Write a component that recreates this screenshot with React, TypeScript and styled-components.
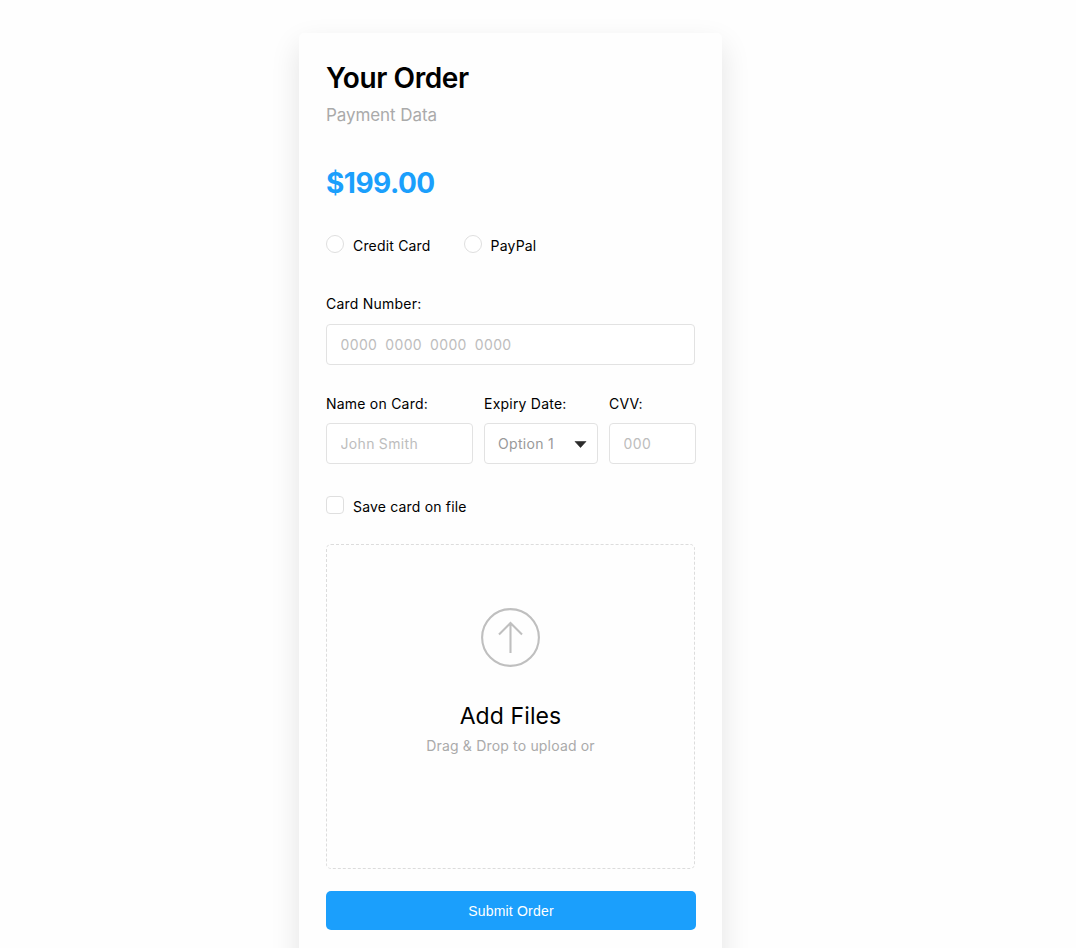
import React from "react";
import styled, { createGlobalStyle } from "styled-components";

const GlobalStyle = createGlobalStyle`
  *, *::before, *::after { box-sizing: border-box; }
  body {
    margin: 0;
    background: #fefefe;
    color: #000;
    font-family: Inter, sans-serif;
  }
`;

const Page = styled.main`
  height: 948px;
  padding: 33px 0 0 299px;
  overflow: hidden;
`;

const Card = styled.form`
  display: flex;
  flex-direction: column;
  width: 423px;
  height: 1000px;
  padding: 28px 26px 0 27px;
  border-radius: 5px;
  background: #fefefe;
  box-shadow: 0 12px 30px rgba(0, 0, 0, 0.11);
`;

const Title = styled.h1`
  margin: 0;
  font-size: 28px;
  line-height: 35px;
  font-weight: 600;
  letter-spacing: -0.4px;
`;

const Subtitle = styled.p`
  margin: 8px 0 0;
  font-size: 17px;
  line-height: 22px;
  letter-spacing: -0.08px;
  color: #aaa;
`;

const Price = styled.div`
  margin-top: 40px;
  font-size: 28px;
  line-height: 35px;
  font-weight: 650;
  letter-spacing: -0.5px;
  color: #1b9ffc;
`;

const Methods = styled.div`
  display: flex;
  gap: 33px;
  margin-top: 34px;
`;

const Choice = styled.label`
  display: flex;
  align-items: flex-start;
  gap: 9px;
  height: 21px;
  font-size: 14px;
  line-height: 20px;
  letter-spacing: 0.18px;

  span { padding-top: 1px; }
`;

const SaveChoice = styled(Choice)`
  margin-top: 32px;
`;

const Toggle = styled.input<{ $round?: boolean }>`
  appearance: none;
  width: 18px;
  height: 18px;
  margin: 0;
  border: 1px solid #dfdfdf;
  border-radius: ${(p) => (p.$round ? "50%" : "4px")};
  background: #fff;
`;

const Field = styled.label`
  display: flex;
  flex-direction: column;
  font-size: 14px;
  line-height: 20px;
  letter-spacing: 0.22px;
`;

const NumberField = styled(Field)`
  width: 369px;
  margin-top: 38px;
  gap: 10px;
`;

const Details = styled.div`
  display: grid;
  grid-template-columns: 147px 114px 87px;
  column-gap: 11px;
  margin-top: 29px;

  ${Field} { gap: 9px; }
`;

const TextInput = styled.input`
  width: 100%;
  height: 41px;
  margin: 0;
  padding: 0 13px 0 13.5px;
  border: 1px solid #e2e2e2;
  border-radius: 4px;
  background: #fff;
  font: 14px Inter, sans-serif;
  letter-spacing: 0.36px;
  word-spacing: -0.3px;
  outline: none;

  &::placeholder { color: #bdbdbd; opacity: 1; }
`;

const Select = styled.div`
  display: flex;
  align-items: center;
  justify-content: space-between;
  height: 41px;
  padding: 0 10px 0 13px;
  border: 1px solid #e2e2e2;
  border-radius: 4px;
  background: #fff;
  letter-spacing: 0.3px;
  color: #999;

  svg { position: relative; top: 1px; }
`;

const DropZone = styled.section`
  display: flex;
  flex-direction: column;
  align-items: center;
  width: 369px;
  height: 325px;
  margin-top: 27px;
  padding-top: 62px;
  border: 1px dashed #dcdcdc;
  border-radius: 5px;
`;

const DropTitle = styled.h2`
  margin: 34px 0 0;
  font-size: 23px;
  line-height: 28px;
  font-weight: 400;
  letter-spacing: 0.1px;
`;

const DropHint = styled.p`
  margin: 6px 0 0;
  font-size: 14px;
  line-height: 20px;
  letter-spacing: 0.18px;
  color: #aaa;
`;

const Submit = styled.button`
  height: 39px;
  margin-top: 22px;
  padding: 0;
  border: 0;
  border-radius: 5px;
  background: #1b9ffc;
  color: #fff;
  font: 14px "Liberation Sans", Arial, sans-serif;
  letter-spacing: 0.2px;
`;

const UploadIcon = () => (
  <svg width="61" height="61" viewBox="0 0 61 61" fill="none" stroke="#bfbfbf" strokeWidth="2.1">
    <circle cx="30.5" cy="30.5" r="28.4" />
    <path d="M30.5 46V16.5M19 27.5L30.5 16L42 27.5" />
  </svg>
);

const Caret = () => (
  <svg width="13" height="7" viewBox="0 0 13 7">
    <path d="M1 0.5h11L6.5 6.6z" fill="#2b2b2b" stroke="#2b2b2b" strokeWidth="0.6" strokeLinejoin="round" />
  </svg>
);

export default function App() {
  return (
    <Page>
      <GlobalStyle />
      <Card onSubmit={(e) => e.preventDefault()}>
        <Title>Your Order</Title>
        <Subtitle>Payment Data</Subtitle>
        <Price>$199.00</Price>
        <Methods>
          <Choice>
            <Toggle $round type="radio" name="method" />
            <span>Credit Card</span>
          </Choice>
          <Choice>
            <Toggle $round type="radio" name="method" />
            <span>PayPal</span>
          </Choice>
        </Methods>
        <NumberField>
          Card Number:
          <TextInput placeholder="0000&nbsp; 0000&nbsp; 0000&nbsp; 0000" />
        </NumberField>
        <Details>
          <Field>
            Name on Card:
            <TextInput placeholder="John Smith" />
          </Field>
          <Field>
            Expiry Date:
            <Select>
              Option 1
              <Caret />
            </Select>
          </Field>
          <Field>
            CVV:
            <TextInput placeholder="000" />
          </Field>
        </Details>
        <SaveChoice>
          <Toggle type="checkbox" />
          <span>Save card on file</span>
        </SaveChoice>
        <DropZone>
          <UploadIcon />
          <DropTitle>Add Files</DropTitle>
          <DropHint>Drag &amp; Drop to upload or</DropHint>
        </DropZone>
        <Submit type="submit">Submit Order</Submit>
      </Card>
    </Page>
  );
}
